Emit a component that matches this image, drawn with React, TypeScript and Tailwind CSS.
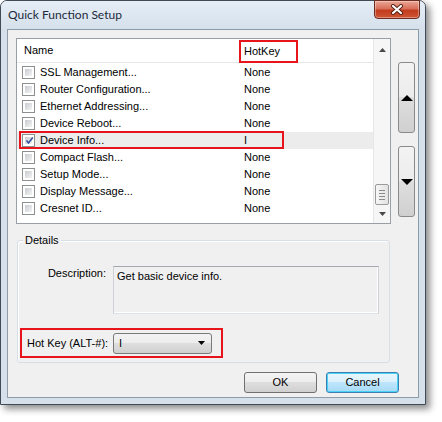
import React from "react";

const rows: { name: string; key: string; checked?: boolean }[] = [
  { name: "SSL Management...", key: "None" },
  { name: "Router Configuration...", key: "None" },
  { name: "Ethernet Addressing...", key: "None" },
  { name: "Device Reboot...", key: "None" },
  { name: "Device Info...", key: "I", checked: true },
  { name: "Compact Flash...", key: "None" },
  { name: "Setup Mode...", key: "None" },
  { name: "Display Message...", key: "None" },
  { name: "Cresnet ID...", key: "None" },
];

function CheckBox({ checked }: { checked?: boolean }) {
  return (
    <div className="relative w-[13px] h-[13px] border border-[#8e8f8f] bg-white p-[2px] shrink-0">
      <div className="w-full h-full bg-gradient-to-br from-[#c9cbcf] to-[#f4f4f4]" />
      {checked && (
        <svg className="absolute left-[1px] top-[0px]" width="11" height="11" viewBox="0 0 11 11">
          <path d="M2.5 5.5 L4.5 8 L8.8 2.5" fill="none" stroke="#3550a0" strokeWidth="1.6" />
        </svg>
      )}
    </div>
  );
}

const btnGrad =
  "bg-[linear-gradient(#f3f3f3_0%,#ececec_50%,#dedede_50%,#d0d0d0_100%)]";

export default function App() {
  return (
    <div className="w-[442px] h-[422px] bg-white font-['Liberation_Sans',Arial,sans-serif] text-[11px] text-black">
      <div className="w-[426px] h-[405px] flex flex-col rounded-t-[7px] border border-[#414b56] bg-[#d5e0eb] shadow-[4px_4px_7px_rgba(0,0,0,0.45)]">
        {/* Title bar */}
        <div className="h-[28px] shrink-0 flex items-start justify-between pl-[7px] pr-[5px] rounded-t-[6px] bg-gradient-to-b from-[#e6eef7] to-[#d5e0eb]">
          <span className="mt-[6px] text-[12px] leading-[15px] text-[#1c2a3a] font-['Lato',sans-serif]">
            Quick Function Setup
          </span>
          <div className="-mt-[1px] w-[46px] h-[19px] rounded-b-[4px] border border-[#6b2b1e] flex items-center justify-center bg-[linear-gradient(#eba796_0%,#d8705a_45%,#c23c1d_55%,#cf5535_100%)] shadow-[inset_0_0_0_1px_rgba(255,255,255,0.35)]">
            <svg width="14" height="11" viewBox="0 0 14 11">
              <path d="M3 2 L11 9 M11 2 L3 9" stroke="#4d1d12" strokeWidth="4" strokeLinecap="round" />
              <path d="M3 2 L11 9 M11 2 L3 9" stroke="#ffffff" strokeWidth="2.2" strokeLinecap="round" />
            </svg>
          </div>
        </div>

        {/* Client area */}
        <div className="mx-[6px] mb-[6px] flex-1 border border-[#8e9caa] bg-[#f0f0f0] pl-[8px] pt-[8px]">
          {/* List + scroll buttons */}
          <div className="flex items-start gap-[7px]">
            <div className="w-[375px] h-[186px] border border-[#9a9fa6] bg-white flex">
              <div className="w-[356px] flex flex-col">
                <div className="h-[24px] shrink-0 flex items-start border-b border-[#e6e6e6]">
                  <div className="w-[222px] h-[23px] pl-[7px] flex items-center">Name</div>
                  <div className="w-[59px] h-[23px] mt-[1px] border-2 border-[#e8141b] pl-[3px] flex items-center">
                    HotKey
                  </div>
                </div>
                <div className="pt-[1px] flex flex-col">
                  {rows.map((r) => (
                    <div
                      key={r.name}
                      className={
                        "relative h-[17px] flex items-center " + (r.checked ? "bg-[#ececec]" : "")
                      }
                    >
                      <div className="w-[222px] pl-[5px] flex items-center gap-[5px]">
                        <CheckBox checked={r.checked} />
                        <span className="leading-[13px] whitespace-nowrap">{r.name}</span>
                      </div>
                      <div className="pl-[5px] leading-[13px]">{r.key}</div>
                      {r.checked && (
                        <div className="absolute left-[2px] -top-[1px] w-[265px] h-[18px] border-2 border-[#e8141b]" />
                      )}
                    </div>
                  ))}
                </div>
              </div>
              {/* Scrollbar */}
              <div className="w-[17px] flex flex-col bg-[#f6f6f6] border-l border-[#e6e6e6]">
                <div className="h-[17px] flex items-end justify-center pb-[4px]">
                  <svg width="7" height="4" viewBox="0 0 7 4">
                    <polygon points="0,4 3.5,0 7,4" fill="#4a4a4a" />
                  </svg>
                </div>
                <div className="flex-1 flex flex-col justify-end items-center pb-[1px]">
                  <div className="w-[14px] h-[21px] rounded-[2px] border border-[#9b9b9b] bg-gradient-to-r from-[#f7f7f7] to-[#e2e2e2] flex flex-col items-center justify-center gap-[2px]">
                    <div className="w-[6px] h-[1px] bg-[#8a8a8a]" />
                    <div className="w-[6px] h-[1px] bg-[#8a8a8a]" />
                    <div className="w-[6px] h-[1px] bg-[#8a8a8a]" />
                    <div className="w-[6px] h-[1px] bg-[#8a8a8a]" />
                  </div>
                </div>
                <div className="h-[17px] flex items-start justify-center pt-[6px]">
                  <svg width="7" height="4" viewBox="0 0 7 4">
                    <polygon points="0,0 3.5,4 7,0" fill="#4a4a4a" />
                  </svg>
                </div>
              </div>
            </div>

            {/* Move up/down buttons */}
            <div className="w-[17px] flex flex-col gap-[13px] pt-[24px]">
              <div className={"h-[71px] rounded-[3px] border border-[#8a8a8a] flex items-center justify-center " + btnGrad}>
                <svg width="12" height="6" viewBox="0 0 12 6">
                  <polygon points="0,6 6,0 12,6" fill="#000" />
                </svg>
              </div>
              <div className={"h-[71px] rounded-[3px] border border-[#8a8a8a] flex items-center justify-center " + btnGrad}>
                <svg width="12" height="6" viewBox="0 0 12 6">
                  <polygon points="0,0 6,6 12,0" fill="#000" />
                </svg>
              </div>
            </div>
          </div>

          {/* Details group */}
          <div className="relative mt-[16px] ml-[1px] w-[373px] h-[123px] rounded-[3px] border border-[#d5dfe5] shadow-[inset_1px_1px_0_#ffffff]">
            <span className="absolute left-[5px] -top-[8px] px-[2px] bg-[#f0f0f0] leading-[14px]">Details</span>
            <div className="mt-[25px] flex items-start">
              <div className="w-[88px] text-right leading-[14px]">Description:</div>
              <div className="ml-[7px] w-[266px] h-[48px] border border-[#cdd1d7] border-t-[#a4a7ad] border-b-[#dde2e8] bg-[#f0f0f0] shadow-[inset_-1px_-1px_0_#ffffff] pl-[3px] pt-[2px] leading-[14px]">
                Get basic device info.
              </div>
            </div>
            <div className="mt-[14px] ml-[2px] w-[203px] h-[30px] border-2 border-[#e8141b] pl-[5px] flex items-center">
              <span className="w-[86px] leading-[14px]">Hot Key (ALT-#):</span>
              <div className={"w-[99px] h-[21px] rounded-[3px] border border-[#7a7a7a] flex items-center justify-between pl-[5px] pr-[6px] " + btnGrad}>
                <span className="leading-[14px]">I</span>
                <svg width="7" height="4" viewBox="0 0 7 4">
                  <polygon points="0,0 3.5,4 7,0" fill="#000" />
                </svg>
              </div>
            </div>
          </div>

          {/* Buttons */}
          <div className="mt-[9px] pl-[228px] flex gap-[9px]">
            <div className={"w-[73px] h-[21px] rounded-[3px] border border-[#707070] flex items-center justify-center " + btnGrad}>
              OK
            </div>
            <div className="w-[73px] h-[21px] rounded-[3px] border border-[#3c7fb1] flex items-center justify-center bg-[linear-gradient(#eaf6fd_0%,#d9f0fc_50%,#bee6fd_50%,#a7d9f5_100%)] shadow-[inset_0_0_0_1px_#48d2f5]">
              Cancel
            </div>
          </div>
        </div>
      </div>
    </div>
  );
}
